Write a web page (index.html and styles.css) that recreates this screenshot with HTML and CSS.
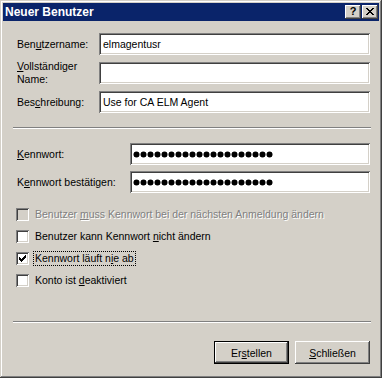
FILE: index.html
```html
<!DOCTYPE html>
<html lang="de">
<head>
<meta charset="utf-8">
<title>Neuer Benutzer</title>
<link rel="stylesheet" href="styles.css">
</head>
<body>
<div class="window">
  <div class="titlebar">
    <span class="title">Neuer Benutzer</span>
    <div class="tb-buttons">
      <button class="tb-btn help" type="button">?</button>
      <button class="tb-btn close" type="button" aria-label="Schließen">
        <svg width="8" height="7" viewBox="0 0 8 7" shape-rendering="crispEdges"><path d="M0 0h2v1h-2z M6 0h2v1h-2z M1 1h2v1h-2z M5 1h2v1h-2z M2 2h4v1h-4z M3 3h2v1h-2z M2 4h4v1h-4z M1 5h2v1h-2z M5 5h2v1h-2z M0 6h2v1h-2z M6 6h2v1h-2z" fill="#000"/></svg>
      </button>
    </div>
  </div>
  <div class="client">
    <div class="fields fields-user">
      <label class="lbl">Ben<u>u</u>tzername:</label>
      <input class="edit" type="text" value="elmagentusr">
      <label class="lbl"><u>V</u>ollständiger<br>Name:</label>
      <input class="edit" type="text" value="">
      <label class="lbl">Bes<u>c</u>hreibung:</label>
      <input class="edit" type="text" value="Use for CA ELM Agent">
    </div>
    <div class="sep"></div>
    <div class="fields fields-pw">
      <label class="lbl"><u>K</u>ennwort:</label>
      <div class="edit pw" role="textbox" aria-label="Kennwort">
        <span class="dot"></span><span class="dot"></span><span class="dot"></span><span class="dot"></span><span class="dot"></span><span class="dot"></span><span class="dot"></span><span class="dot"></span><span class="dot"></span><span class="dot"></span><span class="dot"></span><span class="dot"></span><span class="dot"></span><span class="dot"></span><span class="dot"></span><span class="dot"></span><span class="dot"></span><span class="dot"></span><span class="dot"></span><span class="dot"></span>
      </div>
      <label class="lbl">K<u>e</u>nnwort bestätigen:</label>
      <div class="edit pw" role="textbox" aria-label="Kennwort bestätigen">
        <span class="dot"></span><span class="dot"></span><span class="dot"></span><span class="dot"></span><span class="dot"></span><span class="dot"></span><span class="dot"></span><span class="dot"></span><span class="dot"></span><span class="dot"></span><span class="dot"></span><span class="dot"></span><span class="dot"></span><span class="dot"></span><span class="dot"></span><span class="dot"></span><span class="dot"></span><span class="dot"></span><span class="dot"></span><span class="dot"></span>
      </div>
    </div>
    <div class="checks">
      <div class="check disabled"><span class="box"></span><span class="ctext">Benutzer <u>m</u>uss Kennwort bei der nächsten Anmeldung ändern</span></div>
      <div class="check"><span class="box"></span><span class="ctext">Benutzer kann Kennwort <u>n</u>icht ändern</span></div>
      <div class="check"><span class="box"><svg width="13" height="13" viewBox="0 0 13 13" shape-rendering="crispEdges"><polygon points="3,5 4,5 4,6 5,6 5,7 6,7 6,6 7,6 7,5 8,5 8,4 9,4 9,3 10,3 10,6 9,6 9,7 8,7 8,8 7,8 7,9 6,9 6,10 5,10 5,9 4,9 4,8 3,8" fill="#000"/></svg></span><span class="ctext focus">Kennwort läuft n<u>i</u>e ab</span></div>
      <div class="check"><span class="box"></span><span class="ctext">Konto ist <u>d</u>eaktiviert</span></div>
    </div>
    <div class="sep sep-bottom"></div>
    <div class="actions">
      <button class="btn default" type="button">Er<u>s</u>tellen</button>
      <button class="btn" type="button"><u>S</u>chließen</button>
    </div>
  </div>
</div>
</body>
</html>
```
FILE: styles.css
```css
* { box-sizing: border-box; }
html, body { margin: 0; padding: 0; background: #d4d0c8; }
body {
  font-family: "Liberation Sans", Arial, sans-serif;
  font-size: 10.5px;
  color: #000;
}
u { text-decoration: underline; text-underline-offset: 1px; }

.window {
  width: 382px;
  height: 378px;
  background: #d4d0c8;
  padding: 3px;
  display: flex;
  flex-direction: column;
  box-shadow: inset -1px -1px #404040, inset 1px 1px #d4d0c8,
              inset -2px -2px #808080, inset 2px 2px #fff;
}

.titlebar {
  height: 18px;
  background: #0a246a;
  display: flex;
  align-items: center;
  justify-content: space-between;
  padding: 0 1px 0 2px;
}
.title {
  color: #fff;
  font-weight: bold;
  font-size: 12px;
  line-height: 14px;
}
.tb-buttons { display: flex; gap: 1px; }
.tb-btn {
  width: 16px;
  height: 14px;
  margin: 0;
  padding: 0;
  border: none;
  background: #d4d0c8;
  box-shadow: inset -1px -1px #404040, inset 1px 1px #fff,
              inset -2px -2px #808080, inset 2px 2px #d4d0c8;
  display: flex;
  align-items: center;
  justify-content: center;
  font-family: "Liberation Sans", Arial, sans-serif;
  font-weight: bold;
  font-size: 11px;
  line-height: 11px;
  color: #000;
}
.tb-btn.close svg { display: block; margin-top: -1px; }
.tb-btn.help { padding-bottom: 1px; }

.client {
  flex: 1;
  padding: 12px 8px 0 10px;
  display: flex;
  flex-direction: column;
}

.fields {
  display: grid;
  padding-left: 4px;
  align-items: center;
}
.fields-user {
  grid-template-columns: 82px 271px;
  grid-auto-rows: 22px;
  row-gap: 7px;
}
.fields-pw {
  margin-top: 14px;
  grid-template-columns: 113px 240px;
  grid-auto-rows: 22px;
  row-gap: 6px;
}
.lbl { line-height: 13px; }

.edit {
  height: 22px;
  margin: 0;
  border: none;
  outline: none;
  background: #fff;
  padding: 0 2px 0 4px;
  font-family: "Liberation Sans", Arial, sans-serif;
  font-size: 10.5px;
  color: #000;
  box-shadow: inset 1px 1px #808080, inset -1px -1px #fff,
              inset 2px 2px #404040, inset -2px -2px #d4d0c8;
  -webkit-appearance: none;
  appearance: none;
}
.pw {
  display: flex;
  align-items: center;
  gap: 2px;
  padding-left: 4px;
}
.dot {
  width: 5px;
  height: 5px;
  border-radius: 50%;
  background: #000;
  box-shadow: 0 0 0 0.5px #000;
}

.sep {
  margin-top: 14px;
  height: 2px;
  border-top: 1px solid #808080;
  border-bottom: 1px solid #fff;
}
.sep-bottom { margin-top: 34px; }

.checks {
  margin-top: 15px;
  padding-left: 3px;
  display: flex;
  flex-direction: column;
  gap: 9px;
}
.check {
  height: 13px;
  display: flex;
  align-items: center;
  gap: 4px;
}
.box {
  width: 13px;
  height: 13px;
  flex: none;
  background: #fff;
  box-shadow: inset 1px 1px #808080, inset -1px -1px #fff,
              inset 2px 2px #404040, inset -2px -2px #d4d0c8;
}
.box svg { display: block; }
.ctext {
  line-height: 13px;
  padding: 0 1px;
  border: 1px solid transparent;
  white-space: nowrap;
}
.ctext.focus { border: 1px dotted #000; }
.check.disabled .box { background: #d4d0c8; }
.check.disabled .ctext { color: #808080; text-shadow: 1px 1px 0 #fff; }

.actions {
  margin-top: 18px;
  display: flex;
  justify-content: flex-end;
  gap: 6px;
  padding-right: 1px;
}
.btn {
  width: 75px;
  height: 23px;
  margin: 0;
  padding: 0;
  border: none;
  background: #d4d0c8;
  font-family: "Liberation Sans", Arial, sans-serif;
  font-size: 10.5px;
  color: #000;
  box-shadow: inset -1px -1px #404040, inset 1px 1px #fff,
              inset -2px -2px #808080, inset 2px 2px #d4d0c8;
}
.btn.default {
  box-shadow: inset 0 0 0 1px #000, inset -2px -2px #404040, inset 2px 2px #fff,
              inset -3px -3px #808080, inset 3px 3px #d4d0c8;
}
```
